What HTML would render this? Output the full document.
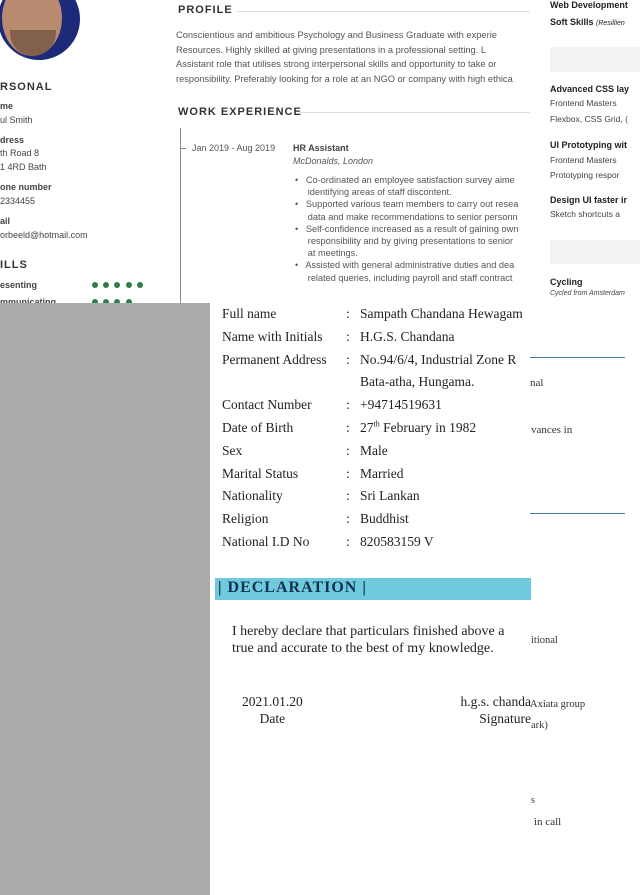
<!DOCTYPE html>
<html><head><meta charset="utf-8"><style>
*{margin:0;padding:0;box-sizing:border-box}
body{width:640px;height:895px;overflow:hidden;background:#fff;position:relative;font-family:"Liberation Sans",sans-serif;color:#333}
.a{position:absolute;white-space:nowrap}
.s{font-size:9px;color:#444}
.b{font-weight:bold}
.h{font-size:11px;font-weight:bold;letter-spacing:1px;color:#333}
.sf{font-family:"Liberation Serif",serif}
.dot{position:absolute;width:6px;height:6px;border-radius:50%;background:#2f7d4a}
</style></head><body>
<div class="a" style="left:-2px;top:-22px;width:82px;height:82px;border-radius:50%;background:#1d2a7a"></div>
<div class="a" style="left:2px;top:-20px;width:60px;height:76px;border-radius:50%;background:#b88a70"></div>
<div class="a" style="left:10px;top:30px;width:46px;height:26px;border-radius:0 0 23px 23px;background:#6b4e3c;opacity:.7"></div>

<div class="a h" style="left:0;top:81px">RSONAL</div>
<div class="a s b" style="left:0;top:101px">me</div>
<div class="a s" style="left:0;top:115px">ul Smith</div>
<div class="a s b" style="left:0;top:135px">dress</div>
<div class="a s" style="left:0;top:148px">th Road 8</div>
<div class="a s" style="left:0;top:162px">1 4RD Bath</div>
<div class="a s b" style="left:0;top:182px">one number</div>
<div class="a s" style="left:0;top:196px">2334455</div>
<div class="a s b" style="left:0;top:216px">ail</div>
<div class="a s" style="left:0;top:230px">orbeeld@hotmail.com</div>
<div class="a h" style="left:0;top:259px">ILLS</div>
<div class="a s b" style="left:0;top:280px">esenting</div>
<div class="dot" style="left:92px;top:282px"></div><div class="dot" style="left:103px;top:282px"></div><div class="dot" style="left:114px;top:282px"></div><div class="dot" style="left:126px;top:282px"></div><div class="dot" style="left:137px;top:282px"></div>
<div class="a s b" style="left:0;top:297px">mmunicating</div>
<div class="dot" style="left:92px;top:299px"></div><div class="dot" style="left:103px;top:299px"></div><div class="dot" style="left:114px;top:299px"></div><div class="dot" style="left:126px;top:299px"></div>
<div class="a" style="left:180px;top:128px;width:1px;height:180px;background:#888"></div>

<div class="a h" style="left:178px;top:4px">PROFILE</div>
<div class="a" style="left:237px;top:11px;width:293px;height:1px;background:#ddd"></div>
<div class="a s" style="left:176px;top:28px;width:354px;overflow:hidden;line-height:14.5px;font-size:9.3px;color:#555">Conscientious and ambitious Psychology and Business Graduate with experie<br>Resources. Highly skilled at giving presentations in a professional setting. L<br>Assistant role that utilises strong interpersonal skills and opportunity to take or<br>responsibility. Preferably looking for a role at an NGO or company with high ethica</div>
<div class="a h" style="left:178px;top:106px">WORK EXPERIENCE</div>
<div class="a" style="left:300px;top:112px;width:230px;height:1px;background:#ddd"></div>
<div class="a" style="left:180px;top:148px;width:6px;height:1px;background:#888"></div>
<div class="a s" style="left:192px;top:143px;color:#555">Jan 2019 - Aug 2019</div>
<div class="a s b" style="left:293px;top:143px">HR Assistant</div>
<div class="a s" style="left:293px;top:156px;font-style:italic;color:#555">McDonalds, London</div>
<div class="a s" style="left:295px;top:174px;width:235px;overflow:hidden;line-height:12.2px;font-size:9.2px;color:#555">•&nbsp;&nbsp; Co-ordinated an employee satisfaction survey aime<br>&nbsp;&nbsp;&nbsp;&nbsp; identifying areas of staff discontent.<br>•&nbsp;&nbsp; Supported various team members to carry out resea<br>&nbsp;&nbsp;&nbsp;&nbsp; data and make recommendations to senior personn<br>•&nbsp;&nbsp; Self-confidence increased as a result of gaining own<br>&nbsp;&nbsp;&nbsp;&nbsp; responsibility and by giving presentations to senior<br>&nbsp;&nbsp;&nbsp;&nbsp; at meetings.<br>•&nbsp;&nbsp; Assisted with general administrative duties and dea<br>&nbsp;&nbsp;&nbsp;&nbsp; related queries, including payroll and staff contract</div>

<div class="a s b" style="left:550px;top:0px;color:#222">Web Development</div>
<div class="a s" style="left:550px;top:17px;color:#222"><b>Soft Skills</b> <i style="font-size:7px">(Resillien</i></div>
<div class="a" style="left:550px;top:47px;width:90px;height:25px;background:#f3f3f3"></div>
<div class="a s b" style="left:550px;top:84px;color:#222">Advanced CSS lay</div>
<div class="a s" style="left:550px;top:98px;font-size:8.5px">Frontend Masters</div>
<div class="a s" style="left:550px;top:114px;font-size:8.5px">Flexbox, CSS Grid, (</div>
<div class="a s b" style="left:550px;top:140px;color:#222">UI Prototyping wit</div>
<div class="a s" style="left:550px;top:155px;font-size:8.5px">Frontend Masters</div>
<div class="a s" style="left:550px;top:170px;font-size:8.5px">Prototyping respor</div>
<div class="a s b" style="left:550px;top:195px;color:#222">Design UI faster ir</div>
<div class="a s" style="left:550px;top:209px;font-size:8.5px">Sketch shortcuts a</div>
<div class="a" style="left:550px;top:240px;width:90px;height:24px;background:#f3f3f3"></div>
<div class="a s b" style="left:550px;top:277px;color:#222">Cycling</div>
<div class="a s" style="left:550px;top:290px;font-size:7px;font-style:italic">Cycled from Amsterdam</div>

<div class="a" style="left:0;top:303px;width:210px;height:592px;background:#aaa"></div>
<div class="a" style="left:210px;top:303px;width:320px;height:592px;background:#fff"></div>

<div class="a sf" style="left:222px;top:303px;font-size:13.5px;line-height:22.8px;color:#222">Full name<br>Name with Initials<br>Permanent Address<br><br>Contact Number<br>Date of Birth<br>Sex<br>Marital Status<br>Nationality<br>Religion<br>National I.D No</div>
<div class="a sf" style="left:346px;top:303px;font-size:13.5px;line-height:22.8px;color:#222">:<br>:<br>:<br><br>:<br>:<br>:<br>:<br>:<br>:<br>:</div>
<div class="a sf" style="left:360px;top:303px;font-size:13.5px;line-height:22.8px;color:#222;width:170px;overflow:hidden">Sampath Chandana Hewagam<br>H.G.S. Chandana<br>No.94/6/4, Industrial Zone R<br>Bata-atha, Hungama.<br>+94714519631<br>27<sup style="font-size:8px;line-height:0">th</sup> February in 1982<br>Male<br>Married<br>Sri Lankan<br>Buddhist<br>820583159 V</div>

<div class="a" style="left:530px;top:357px;width:95px;height:1px;background:#4a7ab0"></div>
<div class="a" style="left:530px;top:513px;width:95px;height:1px;background:#4a7ab0"></div>
<div class="a sf" style="left:530px;top:377px;font-size:11px">nal</div>
<div class="a sf" style="left:531px;top:424px;font-size:11px">vances in</div>
<div class="a sf" style="left:531px;top:635px;font-size:10.5px">itional</div>
<div class="a sf" style="left:530px;top:699px;font-size:10.5px">Axiata group</div>
<div class="a sf" style="left:531px;top:720px;font-size:10.5px">ark)</div>
<div class="a sf" style="left:531px;top:795px;font-size:10px">s</div>
<div class="a sf" style="left:534px;top:816px;font-size:11px">in call</div>

<div class="a" style="left:215px;top:578px;width:316px;height:22px;background:#6ecadc"></div>
<div class="a sf" style="left:218px;top:579px;font-size:16px;letter-spacing:1px;color:#12304f;font-weight:bold">| DECLARATION |</div>
<div class="a sf" style="left:232px;top:623px;font-size:14px;line-height:17px;color:#222;width:299px;overflow:hidden">I hereby declare that particulars finished above a<br>true and accurate to the best of my knowledge.</div>
<div class="a sf" style="left:242px;top:693px;font-size:13.5px;line-height:17px;color:#222;text-align:center">2021.01.20<br>Date</div>
<div class="a sf" style="left:451px;top:693px;font-size:13.5px;line-height:17px;color:#222;text-align:right;width:80px;overflow:hidden">h.g.s. chanda<br>Signature</div>
</body></html>
